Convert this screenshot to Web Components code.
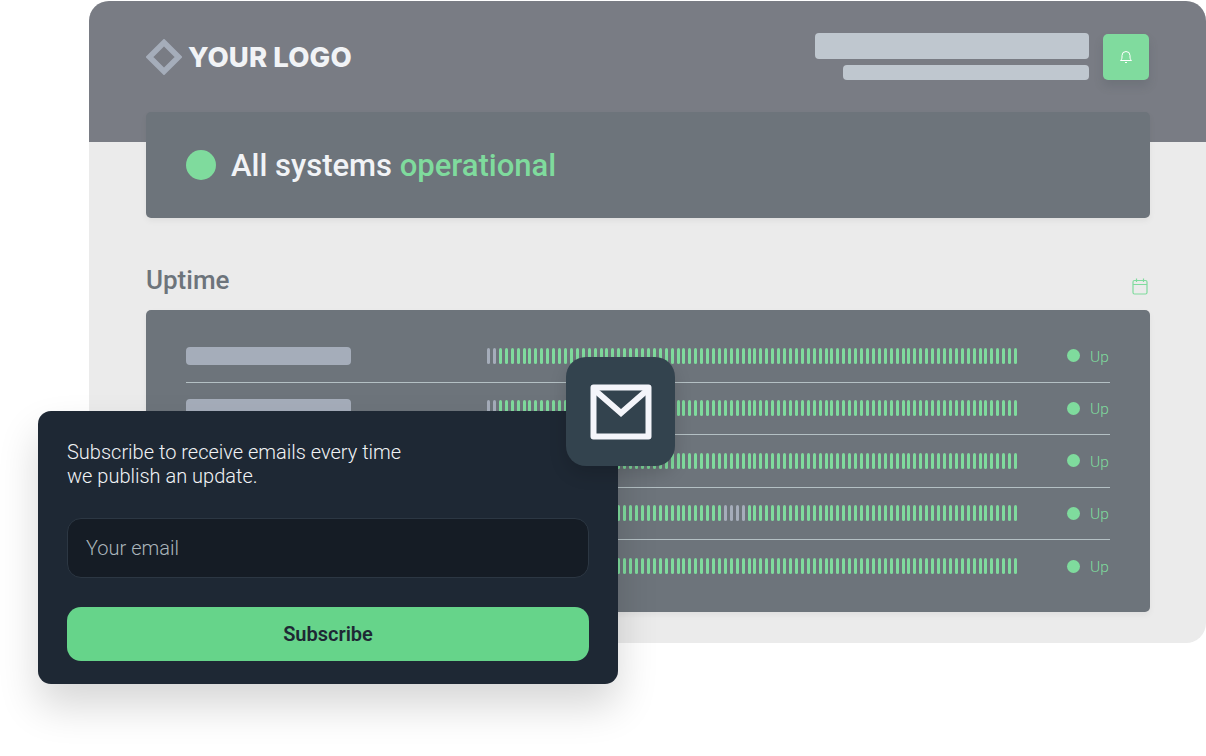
<!DOCTYPE html>
<html>
<head>
<meta charset="utf-8">
<title>Status</title>
<style>
html, body { margin: 0; background: #fff; }
body { font-family: Roboto, "Liberation Sans", sans-serif; width: 1206px; height: 756px; overflow: hidden; }
</style>
</head>
<body>
<status-page>
    <top-bar slot="top">YOUR LOGO</top-bar>
    <status-banner slot="top">All systems <b>operational</b></status-banner>
    <uptime-list title="Uptime">
        <uptime-row>Up</uptime-row>
        <uptime-row>Up</uptime-row>
        <uptime-row>Up</uptime-row>
        <uptime-row down="40-43">Up</uptime-row>
        <uptime-row last>Up</uptime-row>
    </uptime-list>
    <subscribe-card slot="over">
        Subscribe to receive emails every time<br>we publish an update.
    </subscribe-card>
    <mail-badge slot="over"></mail-badge>
</status-page>

<script>
class StatusPage extends HTMLElement{
    constructor(){
        super()
        this.attachShadow({mode: "open"}).innerHTML = `
        <style>
        :host{
            display: block;
            position: relative;
            width: 1206px;
            height: 756px;
        }
        .window{
            margin: 1px 0 0 89px;
            width: 1117px;
            height: 642px;
            box-sizing: border-box;
            background: #ebebeb;
            border-radius: 20px;
            overflow: hidden;
        }
        </style>
        <div class="window">
            <slot name="top"></slot>
            <slot></slot>
        </div>
        <slot name="over"></slot>`
    }
}

class TopBar extends HTMLElement{
    constructor(){
        super()
        this.attachShadow({mode: "open"}).innerHTML = `
        <style>
        :host{
            display: flex;
            box-sizing: border-box;
            height: 141px;
            padding: 32px 57px 0 57px;
            justify-content: space-between;
            align-items: flex-start;
            background: #797c84;
        }
        .logo{
            display: flex;
            align-items: center;
            gap: 6px;
            height: 48px;
            font: 800 27.5px Inter, "Liberation Sans", sans-serif;
            color: #f1f3f6;
            letter-spacing: 0.1px;
        }
        .logo svg{ display: block; }
        .right{
            display: flex;
            gap: 14px;
            margin-top: 1px;
        }
        .lines{
            display: flex;
            flex-direction: column;
            align-items: flex-end;
            gap: 6px;
            margin-top: -1px;
        }
        .lines div{
            background: #bfc7cf;
            border-radius: 4px;
        }
        .lines .a{ width: 274px; height: 26px; }
        .lines .b{ width: 246px; height: 15px; }
        .bell{
            display: flex;
            align-items: center;
            justify-content: center;
            width: 46px;
            height: 46px;
            border-radius: 5px;
            background: #80db9e;
            box-shadow: 0 6px 10px rgba(60,70,80,.18);
        }
        </style>
        <div class="logo">
            <svg width="36" height="36" viewBox="0 0 36 36"><path d="M18 3.5 32.5 18 18 32.5 3.5 18Z" fill="none" stroke="#a5adba" stroke-width="5.5"/></svg>
            <slot></slot>
        </div>
        <div class="right">
            <div class="lines"><div class="a"></div><div class="b"></div></div>
            <div class="bell">
                <svg width="14" height="14" viewBox="0 0 14 14" fill="none" stroke="#fff" stroke-width="1" stroke-linejoin="round"><path d="M1.5 10.5c1-1 1.5-1.6 1.5-3.5V5.5a4 4 0 0 1 8 0V7c0 1.900.5 2.500 1.500 3.500Z"/><path d="M6 12.500h2"/></svg>
            </div>
        </div>`
    }
}

class StatusBanner extends HTMLElement{
    constructor(){
        super()
        this.attachShadow({mode: "open"}).innerHTML = `
        <style>
        :host{
            display: flex;
            align-items: center;
            gap: 15px;
            box-sizing: border-box;
            width: 1004px;
            height: 106px;
            margin: -30px 0 0 57px;
            padding: 0 40px;
            background: #6d747b;
            border-radius: 5px;
            box-shadow: 0 3px 6px rgba(0,0,0,.05);
            font: 500 31px Roboto, sans-serif;
            color: #f1f3f6;
        }
        .dot{
            width: 30px;
            height: 30px;
            border-radius: 50%;
            background: #7fdb9d;
        }
        ::slotted(b){
            font-weight: 500;
            color: #7fdb9d;
        }
        </style>
        <div class="dot"></div>
        <div><slot></slot></div>`
    }
}

class UptimeList extends HTMLElement{
    constructor(){
        super()
        const title = this.getAttribute("title")
        this.attachShadow({mode: "open"}).innerHTML = `
        <style>
        :host{
            display: block;
            margin: 0 56px 0 57px;
        }
        .head{
            display: flex;
            justify-content: space-between;
            align-items: flex-end;
            height: 92px;
            box-sizing: border-box;
            padding-bottom: 15px;
        }
        h2{
            margin: 0;
            font: 500 26px/30px Roboto, sans-serif;
            color: #6d747b;
        }
        .head svg{
            display: block;
            margin: 0 2px 0 0;
            position: relative;
            top: 0;
        }
        .card{
            box-sizing: border-box;
            height: 302px;
            padding: 20px 40px;
            background: #6d747b;
            border-radius: 5px;
            box-shadow: 0 3px 6px rgba(0,0,0,.05);
        }
        </style>
        <div class="head">
            <h2>${title}</h2>
            <svg width="16" height="17" viewBox="0 0 16 17" fill="none" stroke="#80db9e" stroke-width="1.200"><rect x="1" y="2.500" width="14" height="13.500" rx="1.500"/><path d="M1 6.500h14M4.500 .5v3.500M11.500 .5v3.500"/></svg>
        </div>
        <div class="card"><slot></slot></div>`
    }
}

class UptimeRow extends HTMLElement{
    constructor(){
        super()
        const down = (this.getAttribute("down") || "-1--1").split("-").map(Number)
        let bars = ""
        for(let i = 0; i < 90; i++){
            bars += `<i class="${i >= down[0] && i <= down[1] ? "down" : ""}"></i>`
        }
        this.attachShadow({mode: "open"}).innerHTML = `
        <style>
        :host{
            display: flex;
            align-items: center;
            box-sizing: border-box;
            height: 52.500px;
            border-bottom: 1.500px solid #b4c0c4;
        }
        :host([last]){
            border-bottom: 0;
        }
        .label{
            width: 165px;
            height: 18px;
            margin-right: 136px;
            background: #a5adba;
            border-radius: 4px;
        }
        .bars{
            display: flex;
            width: 531px;
            height: 16px;
            justify-content: space-between;
        }
        .bars i{
            display: block;
            width: 3px;
            border-radius: 1.500px;
            background: #7fdb9d;
        }
        .bars i.down{ background: #a5adba; }
        .dot{
            width: 13px;
            height: 13px;
            margin: 0 10px 0 49px;
            border-radius: 50%;
            background: #7fdb9d;
        }
        .state{
            font: 300 15.500px/18px Roboto, sans-serif;
            color: #7fdb9d;
            position: relative;
            top: 1px;
        }
        </style>
        <div class="label"></div>
        <div class="bars">${bars}</div>
        <div class="dot"></div>
        <div class="state"><slot></slot></div>`
    }
}

class SubscribeCard extends HTMLElement{
    constructor(){
        super()
        this.attachShadow({mode: "open"}).innerHTML = `
        <style>
        :host{
            display: block;
            position: absolute;
            left: 38px;
            top: 410px;
            width: 580px;
            height: 273px;
            box-sizing: border-box;
            padding: 29px 29px 0 29px;
            background: #1e2834;
            border-radius: 13px;
            box-shadow: 0 22px 40px rgba(0,0,0,.16);
            font-family: Roboto, sans-serif;
        }
        .msg{
            height: 48px;
            font: 300 20px/24px Roboto, sans-serif;
            color: #f1f3f6;
        }
        .input{
            box-sizing: border-box;
            height: 60px;
            margin-top: 30px;
            padding: 0 18px;
            display: flex;
            align-items: center;
            background: #151c25;
            border: 1px solid #2c3743;
            border-radius: 14px;
            font: 300 20px Roboto, sans-serif;
            color: #aab5bb;
        }
        .btn{
            display: flex;
            align-items: center;
            justify-content: center;
            height: 54px;
            margin-top: 29px;
            background: #66d48a;
            border-radius: 14px;
            font: 600 20px Roboto, sans-serif;
            color: #1e2834;
        }
        </style>
        <div class="msg"><slot></slot></div>
        <div class="input">Your email</div>
        <div class="btn">Subscribe</div>`
    }
}

class MailBadge extends HTMLElement{
    constructor(){
        super()
        this.attachShadow({mode: "open"}).innerHTML = `
        <style>
        :host{
            display: flex;
            align-items: center;
            justify-content: center;
            position: absolute;
            left: 566px;
            top: 356px;
            width: 109px;
            height: 109px;
            background: #33434e;
            border-radius: 20px;
            box-shadow: 0 8px 18px rgba(0,0,0,.14);
        }
        </style>
        <svg width="62" height="56" viewBox="0 0 62 56" fill="none" stroke="#f4f5fa" stroke-width="6" stroke-linejoin="round"><rect x="3.500" y="3.500" width="55" height="49"/><path d="M3.500 5 31 29 58.500 5" stroke-linejoin="miter"/></svg>`
    }
}

customElements.define("status-page", StatusPage)
customElements.define("top-bar", TopBar)
customElements.define("status-banner", StatusBanner)
customElements.define("uptime-list", UptimeList)
customElements.define("uptime-row", UptimeRow)
customElements.define("subscribe-card", SubscribeCard)
customElements.define("mail-badge", MailBadge)
</script>
</body>
</html>
